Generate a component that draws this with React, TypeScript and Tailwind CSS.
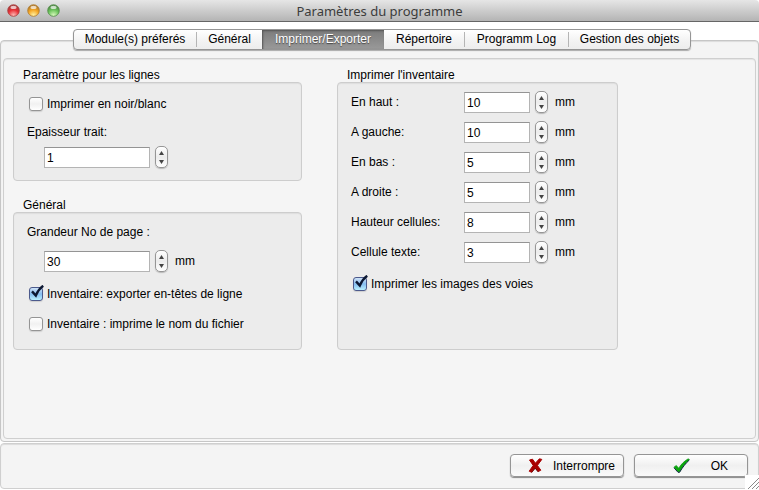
import { useState } from 'react';
import type { ReactNode } from 'react';

const tabs = [
  { name: 'Module(s) préferés', width: 'w-[122px]' },
  { name: 'Général', width: 'w-[66px]' },
  { name: 'Imprimer/Exporter', width: 'w-[122px]' },
  { name: 'Répertoire', width: 'w-20' },
  { name: 'Programm Log', width: 'w-[104px]' },
  { name: 'Gestion des objets', width: 'w-[122px]' },
];

const margins = [
  { id: 'top', label: 'En haut :', value: 10 },
  { id: 'left', label: 'A gauche:', value: 10 },
  { id: 'bottom', label: 'En bas :', value: 5 },
  { id: 'right', label: 'A droite :', value: 5 },
  { id: 'cellHeight', label: 'Hauteur cellules:', value: 8 },
  { id: 'cellText', label: 'Cellule texte:', value: 3 },
];

const lights = [
  { name: 'Fermer', id: 'red', rim: '#a83a3a', base: '#e83036', glow: '#ffc0bb' },
  { name: 'Réduire', id: 'amber', rim: '#b07a2a', base: '#f5a623', glow: '#fff6a8' },
  { name: 'Agrandir', id: 'green', rim: '#4f8a45', base: '#6cc45c', glow: '#dcfbc0' },
];

function TrafficLights() {
  return (
    <div className="flex w-16 gap-[7px] pl-[7px]">
      {lights.map((l) => (
        <button key={l.id} type="button" aria-label={l.name}>
          <svg width="13" height="13" viewBox="0 0 13 13">
            <defs>
              <radialGradient id={l.id} cx="50%" cy="92%" r="80%">
                <stop offset="0" stopColor={l.glow} />
                <stop offset="0.6" stopColor={l.base} />
                <stop offset="1" stopColor={l.rim} />
              </radialGradient>
            </defs>
            <circle cx="6.5" cy="6.5" r="5.8" fill={`url(#${l.id})`} stroke={l.rim} strokeWidth="0.8" />
            <ellipse cx="6.5" cy="3.4" rx="3" ry="1.6" fill="#fff" opacity="0.7" />
          </svg>
        </button>
      ))}
    </div>
  );
}

function Group({ title, children, className = '' }: { title: string; children: ReactNode; className?: string }) {
  return (
    <section className={`flex flex-col ${className}`}>
      <h2 className="h-[15px] pl-[10px] leading-4">{title}</h2>
      <div className="grow rounded border border-[#cdcdcd] bg-[#ececec] px-[13px] shadow-[inset_0_1px_1px_#dedede]">
        {children}
      </div>
    </section>
  );
}

function Spinner({ id, initial, unit, wide }: { id: string; initial: number; unit?: string; wide?: boolean }) {
  const [value, setValue] = useState(String(initial));
  const step = (by: number) => setValue(String((Number(value) || 0) + by));

  return (
    <div className="flex h-[22px] items-center">
      <input
        id={id}
        type="text"
        value={value}
        onChange={(e) => setValue(e.target.value)}
        className={`h-[21px] self-end border border-[#b4b4b4] border-t-[#949494] bg-white pl-[2px] outline-none ${wide ? 'w-[106px]' : 'w-[66px]'}`}
      />
      <div className="ml-[5px] flex h-[22px] w-[13px] flex-col overflow-hidden rounded-[5px] border border-[#969696] bg-gradient-to-b from-white via-[#ececec] to-white shadow-[0_1px_1px_#bbb]">
        <button type="button" aria-label="Augmenter" onClick={() => step(1)} className="flex h-[10px] items-center justify-center pt-px">
          <svg width="5" height="4" viewBox="0 0 5 4"><path d="M2.5 0 5 4H0Z" fill="#444" /></svg>
        </button>
        <button type="button" aria-label="Diminuer" onClick={() => step(-1)} className="flex h-[10px] items-center justify-center">
          <svg width="5" height="4" viewBox="0 0 5 4"><path d="M2.5 4 0 0h5Z" fill="#444" /></svg>
        </button>
      </div>
      {unit && <span className="ml-[7px] leading-4">{unit}</span>}
    </div>
  );
}

function CheckBox({ label, checked = false }: { label: string; checked?: boolean }) {
  return (
    <label className="ml-[2px] flex h-6 items-center">
      <span className="relative size-[14px]">
        <input
          type="checkbox"
          defaultChecked={checked}
          className="peer block size-[14px] appearance-none rounded-[3px] border border-[#949494] bg-gradient-to-b from-white via-[#f1f1f1] to-white shadow-[0_1px_1px_#cfcfcf] checked:border-[#4c5a8c] checked:from-[#cfe2f7] checked:via-[#86bdf0] checked:to-[#b9f0ff]"
        />
        <svg
          className="pointer-events-none absolute -top-[2px] left-0 hidden peer-checked:block"
          width="16"
          height="16"
          viewBox="0 0 16 16"
          fill="none"
        >
          <path d="M3 6.4 6.8 10.6C8.200 7 10.600 3.400 14.200.8" stroke="#0c1833" strokeWidth="2.4" />
        </svg>
      </span>
      <span className="ml-1 leading-4">{label}</span>
    </label>
  );
}

const pushButton =
  'flex h-[23px] w-[114px] items-center justify-between rounded-[4px] border border-[#959595] bg-gradient-to-b from-white via-[#f0f0f0] to-[#fafafa] shadow-[0_1px_1px_#888]';

function App() {
  const [active, setActive] = useState('Imprimer/Exporter');

  return (
    <div className="relative flex min-h-screen flex-col bg-white font-['Liberation_Sans',Arial,sans-serif] text-[12px] text-black">
      <header className="flex h-[22px] items-center rounded-t-[4px] border-b border-[#666] bg-gradient-to-b from-[#e6e6e6] to-[#b4b4b4]">
        <TrafficLights />
        <h1 className="grow pr-16 text-center font-['Noto_Sans','Open_Sans',sans-serif] text-[13px] leading-5 text-[#3c3c3c]">
          Paramètres du programme
        </h1>
      </header>

      <main className="mt-[18px] flex grow flex-col rounded-[4px] border border-[#c6c6c6] bg-[#f4f4f4] px-[2px] pb-[2px] shadow-[inset_0_1px_1px_#dcdcdc]">
        <div className="-mt-3 flex justify-center pl-[5px]">
          <div role="tablist" className="flex h-[21px] rounded-[4px] border border-[#959595] bg-gradient-to-b from-white via-[#f4f4f4] to-[#ededed] shadow-[0_1px_1px_#aaa]">
            {tabs.map((tab, i) => {
              const selected = tab.name === active;
              const divided = i > 0 && !selected && tabs[i - 1].name !== active;
              return (
                <button
                  key={tab.name}
                  type="button"
                  role="tab"
                  aria-selected={selected}
                  onClick={() => setActive(tab.name)}
                  className={`flex items-center justify-center whitespace-nowrap ${tab.width} ${
                    selected
                      ? 'bg-gradient-to-b from-[#7c7c7c] to-[#999] text-white shadow-[inset_1px_1px_2px_#555] [text-shadow:0_1px_1px_#444]'
                      : ''
                  }`}
                >
                  {divided && <span className="h-[15px] w-px bg-[#b5b5b5]" />}
                  <span className="grow pb-[2px] leading-4">{tab.name}</span>
                </button>
              );
            })}
          </div>
        </div>

        <div className="mt-2 flex grow items-start rounded-[4px] border border-[#cfcfcf] bg-[#f5f5f5] px-[9px] pt-2 shadow-[inset_0_1px_1px_#e4e4e4]">
          <div className="flex gap-[35px]">
            <div className="flex w-[289px] flex-col gap-4">
              <Group title="Paramètre pour les lignes">
                <div className="flex flex-col pt-[9px] pb-3">
                  <CheckBox label="Imprimer en noir/blanc" />
                  <label htmlFor="stroke" className="mt-2 h-4 leading-4">Epaisseur trait:</label>
                  <div className="mt-[6px] pl-[17px]">
                    <Spinner id="stroke" initial={1} wide />
                  </div>
                </div>
              </Group>
              <Group title="Général">
                <div className="flex flex-col pt-[11px] pb-[13px]">
                  <label htmlFor="pageNo" className="h-4 leading-4">Grandeur No de page :</label>
                  <div className="mt-[10px] pl-[17px]">
                    <Spinner id="pageNo" initial={30} unit="mm" wide />
                  </div>
                  <div className="mt-[10px] flex flex-col gap-[6px]">
                    <CheckBox label="Inventaire: exporter en-têtes de ligne" checked />
                    <CheckBox label="Inventaire : imprime le nom du fichier" />
                  </div>
                </div>
              </Group>
            </div>

            <Group title="Imprimer l'inventaire" className="w-[281px]">
              <div className="flex flex-col gap-2 pt-2">
                {margins.map((m) => (
                  <div key={m.id} className="flex items-center">
                    <label htmlFor={m.id} className="w-[113px] leading-4">{m.label}</label>
                    <Spinner id={m.id} initial={m.value} unit="mm" />
                  </div>
                ))}
                <div className="pt-px">
                  <CheckBox label="Imprimer les images des voies" checked />
                </div>
              </div>
            </Group>
          </div>
        </div>
      </main>

      <footer className="mt-px mb-px flex h-[46px] justify-end gap-[10px] rounded-[4px] border border-[#cfcfcf] bg-[#f4f4f4] pt-[10px] pr-[10px] shadow-[inset_0_1px_1px_#dcdcdc]">
        <button type="button" className={`${pushButton} pr-2 pl-[17px]`}>
          <svg width="15" height="15" viewBox="0 0 15 15">
            <path d="M1.500 2 4.500 1.200 7.400 5.200 11.400.8l2.400.6L9.400 7.400l3.400 4.800-2.600 1.400L7.200 9.800 3.600 14.200l-2.400-1L5.200 7.400Z" fill="#a80000" stroke="#a80000" strokeWidth="1" strokeLinejoin="round" />
            <path d="M10.200 14 7.200 10.200 3.600 14.600" fill="none" stroke="#5a0000" strokeWidth="0.8" />
          </svg>
          <span className="leading-4">Interrompre</span>
        </button>
        <button type="button" className={`${pushButton} pr-[19px] pl-[38px]`}>
          <svg width="17" height="15" viewBox="0 0 17 15">
            <path d="M1 9.200 3.200 7.600l2.600 2.600C8.200 6 11.600 2.800 15.400.8l.8 1C12.400 5 9.200 9.200 6.600 13.800H5Z" fill="#0aa80a" stroke="#0a9a14" strokeWidth="0.8" />
            <path d="M1 9.800 5 14.300h1.600C9.400 9.400 12.600 5.400 16.400 2" fill="none" stroke="#06183c" strokeWidth="0.9" />
          </svg>
          <span className="leading-4">OK</span>
        </button>
      </footer>

      <svg className="absolute right-0 bottom-0 bg-white" width="14" height="15" viewBox="0 0 14 15">
        <path d="M3 14 14 3M7 14l7-7M11 14l3-3" stroke="#8a8a8a" strokeWidth="1" />
      </svg>
    </div>
  );
}

export default App;
